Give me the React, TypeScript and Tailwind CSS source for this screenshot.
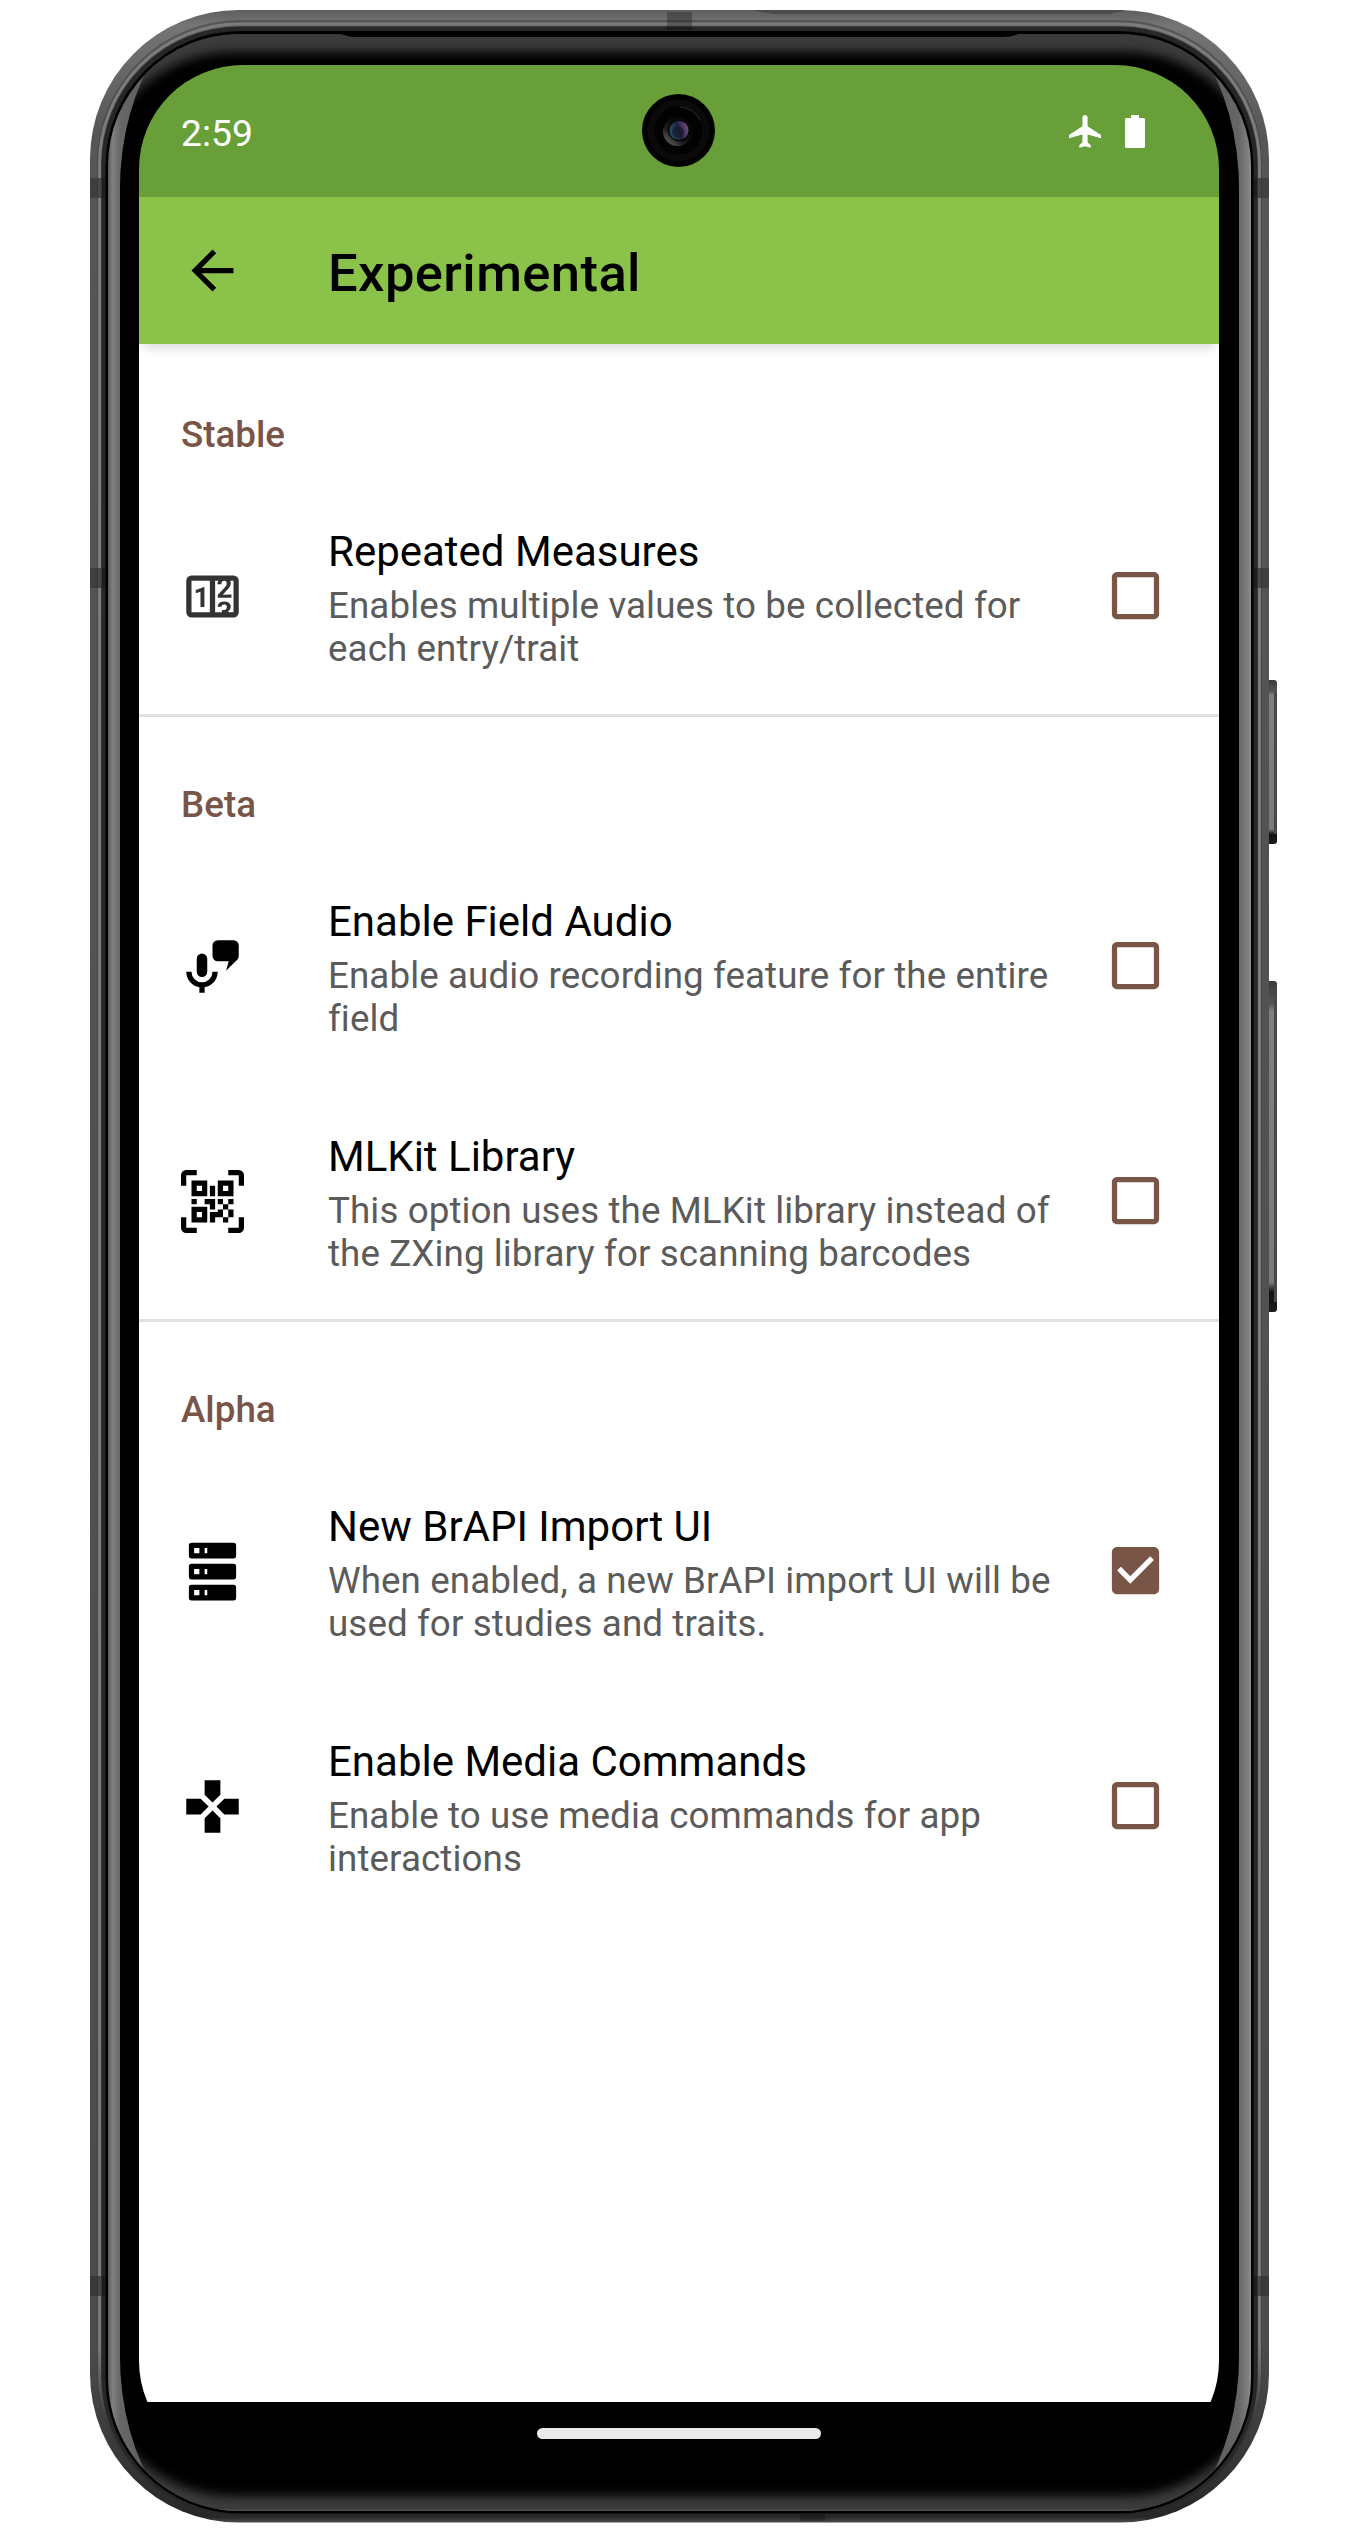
import React from "react";

type IconProps = { d: string; className?: string };

function Icon({ d, className = "fill-black" }: IconProps) {
  return (
    <svg viewBox="0 0 24 24" className={`size-[63px] shrink-0 ${className}`} aria-hidden="true">
      <path d={d} />
    </svg>
  );
}

const icons = {
  back: "M20 11H7.83l5.59-5.59L12 4l-8 8 8 8 1.41-1.41L7.83 13H20v-2z",
  counter:
    "M4,4H20A2,2 0 0,1 22,6V18A2,2 0 0,1 20,20H4A2,2 0 0,1 2,18V6A2,2 0 0,1 4,4M4,6V18H11V6H4M20,18V6H18.76C19,6.54 18.95,7.07 18.95,7.13C18.88,7.8 18.41,8.5 18.24,8.75L15.91,11.3L19.23,11.28L19.24,12.5L14.04,12.47L14,11.47C14,11.47 17.05,8.24 17.2,7.95C17.34,7.67 17.91,6 16.5,6C15.27,6.05 15.41,7.3 15.41,7.3L13.87,7.31C13.87,7.31 13.88,6.65 14.25,6H13V18H15.58L15.57,17.14L16.54,17.13C16.54,17.13 17.45,16.97 17.46,16.08C17.5,15.08 16.65,15.08 16.5,15.08C16.37,15.08 15.43,15.13 15.43,15.95H13.91C13.91,15.95 13.95,13.89 16.5,13.89C19.1,13.89 18.96,15.91 18.96,15.91C18.96,15.91 19,17.16 17.85,17.63L18.37,18H20M8.92,16H7.42V10.2L5.62,10.76V9.53L8.76,8.41H8.92V16Z",
  microphone:
    "M8,7A2,2 0 0,1 10,9V14A2,2 0 0,1 8,16A2,2 0 0,1 6,14V9A2,2 0 0,1 8,7M14,14C14,16.97 11.84,19.44 9,19.92V22H7V19.92C4.16,19.44 2,16.97 2,14H4A4,4 0 0,0 8,18A4,4 0 0,0 12,14H14M21.41,9.41L17.17,13.66L18.18,10H14A2,2 0 0,1 12,8V4A2,2 0 0,1 14,2H20A2,2 0 0,1 22,4V8C22,8.55 21.78,9.05 21.41,9.41Z",
  qrcode:
    "M4,4H10V10H4V4M20,4V10H14V4H20M14,15H16V13H14V11H16V13H18V11H20V13H18V15H20V18H18V20H16V18H13V20H11V16H14V15M16,15V18H18V15H16M4,20V14H10V20H4M6,6V8H8V6H6M16,6V8H18V6H16M6,16V18H8V16H6M4,11H6V13H4V11M9,11H13V15H11V13H9V11M11,6H13V10H11V6M2,2V6H0V2A2,2 0 0,1 2,0H6V2H2M22,0A2,2 0 0,1 24,2V6H22V2H18V0H22M2,18V22H6V24H2A2,2 0 0,1 0,22V18H2M22,22V18H24V22A2,2 0 0,1 22,24H18V22H22Z",
  server:
    "M4,1H20A1,1 0 0,1 21,2V6A1,1 0 0,1 20,7H4A1,1 0 0,1 3,6V2A1,1 0 0,1 4,1M4,9H20A1,1 0 0,1 21,10V14A1,1 0 0,1 20,15H4A1,1 0 0,1 3,14V10A1,1 0 0,1 4,9M4,17H20A1,1 0 0,1 21,18V22A1,1 0 0,1 20,23H4A1,1 0 0,1 3,22V18A1,1 0 0,1 4,17M9,5H10V3H9V5M9,13H10V11H9V13M9,21H10V19H9V21M5,3V5H7V3H5M5,11V13H7V11H5M5,19V21H7V19H5Z",
  gamepad:
    "M16.5,9L13.5,12L16.5,15H22V9M9,16.5V22H15V16.5L12,13.5M7.5,9H2V15H7.5L10.5,12M15,7.5V2H9V7.5L12,10.5L15,7.5Z",
  boxEmpty:
    "M19 5v14H5V5h14m0-2H5c-1.1 0-2 .9-2 2v14c0 1.1.9 2 2 2h14c1.1 0 2-.9 2-2V5c0-1.1-.9-2-2-2z",
  boxChecked:
    "M19 3H5c-1.11 0-2 .9-2 2v14c0 1.1.89 2 2 2h14c1.11 0 2-.9 2-2V5c0-1.1-.89-2-2-2zm-9 14l-5-5 1.41-1.41L10 14.17l7.59-7.59L19 8l-9 9z",
};

type Preference = {
  icon: string;
  iconClass?: string;
  title: string;
  lines: string[];
  checked?: boolean;
};

const sections: { name: string; items: Preference[] }[] = [
  {
    name: "Stable",
    items: [
      {
        icon: icons.counter,
        iconClass: "fill-[#333333]",
        title: "Repeated Measures",
        lines: ["Enables multiple values to be collected for", "each entry/trait"],
      },
    ],
  },
  {
    name: "Beta",
    items: [
      {
        icon: icons.microphone,
        title: "Enable Field Audio",
        lines: ["Enable audio recording feature for the entire", "field"],
      },
      {
        icon: icons.qrcode,
        title: "MLKit Library",
        lines: ["This option uses the MLKit library instead of", "the ZXing library for scanning barcodes"],
      },
    ],
  },
  {
    name: "Alpha",
    items: [
      {
        icon: icons.server,
        title: "New BrAPI Import UI",
        lines: ["When enabled, a new BrAPI import UI will be", "used for studies and traits."],
        checked: true,
      },
      {
        icon: icons.gamepad,
        title: "Enable Media Commands",
        lines: ["Enable to use media commands for app", "interactions"],
      },
    ],
  },
];

function PhoneBody() {
  return (
    <svg className="absolute inset-0 h-[2533px] w-[1367px]" viewBox="0 0 1367 2533" aria-hidden="true">
      <defs>
        <linearGradient id="metal" x1="0" y1="10" x2="0" y2="2522" gradientUnits="userSpaceOnUse">
          <stop offset="0" stopColor="#5e5e5e" />
          <stop offset="0.006" stopColor="#757575" />
          <stop offset="0.05" stopColor="#565656" />
          <stop offset="0.93" stopColor="#4c4c4c" />
          <stop offset="0.97" stopColor="#3a3a3a" />
          <stop offset="0.998" stopColor="#262626" />
          <stop offset="1" stopColor="#4a4a4a" />
        </linearGradient>
        <linearGradient id="shine" x1="0" y1="10" x2="0" y2="2522" gradientUnits="userSpaceOnUse">
          <stop offset="0" stopColor="#7c7c7c" />
          <stop offset="0.93" stopColor="#7a7a7a" />
          <stop offset="0.96" stopColor="#3a3a3a" />
          <stop offset="1" stopColor="#262626" />
        </linearGradient>
        <linearGradient id="side" x1="108" y1="0" x2="1251" y2="0" gradientUnits="userSpaceOnUse">
          <stop offset="0" stopColor="#5a5a5a" />
          <stop offset="0.004" stopColor="#808080" />
          <stop offset="0.011" stopColor="#666666" />
          <stop offset="0.04" stopColor="#5c5c5c" />
          <stop offset="0.08" stopColor="#3c3c3c" />
          <stop offset="0.92" stopColor="#3c3c3c" />
          <stop offset="0.96" stopColor="#5c5c5c" />
          <stop offset="0.989" stopColor="#666666" />
          <stop offset="0.997" stopColor="#7e7e7e" />
          <stop offset="1" stopColor="#8e8e8e" />
        </linearGradient>
        <linearGradient id="button" x1="0" y1="0" x2="0" y2="1">
          <stop offset="0" stopColor="#3a3a3a" />
          <stop offset="0.07" stopColor="#555555" />
          <stop offset="0.09" stopColor="#808080" />
          <stop offset="0.91" stopColor="#7a7a7a" />
          <stop offset="0.94" stopColor="#111111" />
          <stop offset="1" stopColor="#1c1c1c" />
        </linearGradient>
        <clipPath id="innerClip">
          <rect x="108" y="34" width="1143" height="2477" rx="132" />
        </clipPath>
        <clipPath id="glassClip">
          <rect x="120" y="-7" width="1119" height="2559" rx="130" ry="197" />
        </clipPath>
        <filter id="soft" x="-5%" y="-5%" width="110%" height="110%">
          <feGaussianBlur stdDeviation="6" />
        </filter>
      </defs>

      <rect x="1262" y="680" width="15" height="164" rx="3" fill="url(#button)" />
      <rect x="1262" y="981" width="15" height="331" rx="3" fill="url(#button)" />
      <path d="M1274 692h3v142h-3zM1274 993h3v309h-3z" fill="#484848" />

      <rect x="90" y="10" width="1179" height="2512.5" rx="149" fill="url(#metal)" />
      <path d="M754 10H1126L1110 14H775Q762 13 754 10Z" fill="#4b4b4b" />
      <rect x="97" y="20" width="1165" height="2497" rx="143" fill="#3a3a3a" opacity="0.5" />
      <rect x="99.500" y="24" width="1160" height="2491" rx="140" fill="none" stroke="url(#shine)" strokeWidth="3" />
      <rect x="101.500" y="26.500" width="1156" height="2489" rx="138" fill="#272727" />
      <rect x="105.500" y="31" width="1148" height="2482.500" rx="135" fill="#000000" />

      <g clipPath="url(#innerClip)">
        <rect x="108" y="34" width="1143" height="2477" fill="url(#side)" />
        <g clipPath="url(#glassClip)">
          <rect x="108" y="34" width="1143" height="2477" fill="#3b3b3b" />
          <rect x="98" y="54" width="1163" height="2440" rx="130" fill="#000000" filter="url(#soft)" />
          <rect x="127" y="54" width="1105" height="2440" rx="112" fill="#000000" opacity="0.6" filter="url(#soft)" />
          <rect x="120" y="2509" width="1119" height="2" fill="#4a4a4a" />
        </g>
      </g>
      <path d="M336 31H1022V33L1012 36Q1008 37 1000 37H358Q350 37 346 35.500L336 33Z" fill="#000000" />

      <g fill="#000000" opacity="0.25">
        <rect x="90" y="178" width="15" height="20" />
        <rect x="1254" y="178" width="15" height="20" />
        <rect x="90" y="568" width="15" height="20" />
        <rect x="1254" y="568" width="15" height="20" />
        <rect x="90" y="2276" width="15" height="20" />
        <rect x="1254" y="2276" width="15" height="20" />
        <rect x="667" y="12" width="25" height="18" />
        <rect x="667" y="12" width="25" height="18" />
        <rect x="800" y="2514" width="25" height="7" />
      </g>
      <g fill="#3a3a3a" opacity="0.6">
        <rect x="98" y="178" width="4" height="20" />
        <rect x="1257" y="178" width="4" height="20" />
        <rect x="98" y="568" width="4" height="20" />
        <rect x="1257" y="568" width="4" height="20" />
        <rect x="98" y="2276" width="4" height="20" />
        <rect x="1257" y="2276" width="4" height="20" />
      </g>
    </svg>
  );
}

function Camera() {
  return (
    <svg viewBox="-36.5 -36.5 73 73" className="absolute top-[29px] left-[503px] size-[73px]" aria-hidden="true">
      <defs>
        <linearGradient id="lens" x1="0" y1="0.6" x2="1" y2="0.3">
          <stop offset="0" stopColor="#1f5668" />
          <stop offset="0.5" stopColor="#20203c" />
          <stop offset="1" stopColor="#7a4f8a" />
        </linearGradient>
        <linearGradient id="rim" x1="0" y1="1" x2="0.7" y2="0.2">
          <stop offset="0" stopColor="#777777" />
          <stop offset="0.5" stopColor="#1a1a1a" />
          <stop offset="1" stopColor="#050505" />
        </linearGradient>
      </defs>
      <circle r="36.500" fill="#000000" />
      <circle r="31" fill="#0a0a0a" />
      <circle r="24" fill="#020202" />
      <path d="M2 -23.500A24 24 0 0 1 22 -10" fill="none" stroke="#2c2c2c" strokeWidth="1" />
      <circle cx="-1" cy="1" r="14.500" fill="url(#rim)" />
      <circle cx="1.500" cy="-1" r="12" fill="#080808" />
      <circle cx="0.500" cy="0" r="9.500" fill="url(#lens)" />
      <circle cx="-0.500" cy="1.500" r="6" fill="#12152a" opacity="0.6" />
    </svg>
  );
}

function StatusBar() {
  return (
    <div className="relative flex h-[132px] shrink-0 items-center bg-[#689f38] pr-[74px] pl-[42px] text-white">
      <span className="pt-[5px] text-[37.25px] leading-none">2:59</span>
      <Camera />
      <svg viewBox="0 0 32 33" className="ml-auto h-[33px] w-[32px] fill-white" aria-hidden="true">
        <path d="M16 0C14.400 0 13.400 1.200 13.400 2.800V11.300L0 20V23.200L13.400 19.400V27.500L10.300 30V32.800L16 31.300L21.700 32.800V30L18.600 27.500V19.400L32 23.200V20L18.600 11.300V2.800C18.600 1.200 17.600 0 16 0Z" />
      </svg>
      <svg viewBox="0 0 20 33" className="ml-[24px] h-[33px] w-[20px] fill-white" aria-hidden="true">
        <path d="M6 0H14V3H18.500Q20 3 20 4.500V31.500Q20 33 18.500 33H1.500Q0 33 0 31.500V4.500Q0 3 1.500 3H6Z" />
      </svg>
    </div>
  );
}

function AppBar() {
  return (
    <header className="relative flex h-[147px] shrink-0 items-center bg-[#8bc34a] pl-[42px] shadow-[0_8px_10px_-4px_rgba(0,0,0,0.14)]">
      <Icon d={icons.back} />
      <h1 className="ml-[84px] pt-[4px] text-[52.5px] leading-[62px] font-medium tracking-[0.42px] text-black">
        Experimental
      </h1>
    </header>
  );
}

function PreferenceRow({ item }: { item: Preference }) {
  return (
    <div className="flex h-[235px] items-center pr-[52.5px] pl-[42px]">
      <Icon d={item.icon} className={item.iconClass} />
      <div className="ml-[84px] flex-1 pt-[4px] whitespace-nowrap">
        <div className="text-[42px] leading-[49px] text-black">{item.title}</div>
        <div className="mt-[8px] text-[36.75px] leading-[43px] tracking-[0.09px] text-[#5b5b5b]">
          {item.lines.map((line) => (
            <div key={line}>{line}</div>
          ))}
        </div>
      </div>
      <div className="pb-[2px]">
        <Icon d={item.checked ? icons.boxChecked : icons.boxEmpty} className="fill-[#795548]" />
      </div>
    </div>
  );
}

export default function App() {
  return (
    <div className="relative h-[2533px] w-[1367px] overflow-hidden bg-white pt-[65px] pl-[139px] font-['Roboto',sans-serif]">
      <PhoneBody />
      <main className="relative flex h-[2400px] w-[1080px] flex-col overflow-hidden rounded-[104px]">
        <StatusBar />
        <AppBar />
        <div className="flex-1 bg-white">
          {sections.map((section, index) => (
            <section key={section.name}>
              <h2
                className={`flex h-[135px] items-center px-[42px] text-[36.75px] leading-[43px] font-medium text-[#795548] ${
                  index > 0 ? "border-t-[3px] border-[#e0e0e0] pt-[43px]" : "pt-[45px]"
                }`}
              >
                {section.name}
              </h2>
              {section.items.map((item) => (
                <PreferenceRow key={item.title} item={item} />
              ))}
            </section>
          ))}
        </div>
        <div className="flex h-[63px] shrink-0 justify-center bg-black pt-[26px]">
          <div className="h-[11px] w-[284px] rounded-full bg-[#ebebeb]" />
        </div>
      </main>
    </div>
  );
}
